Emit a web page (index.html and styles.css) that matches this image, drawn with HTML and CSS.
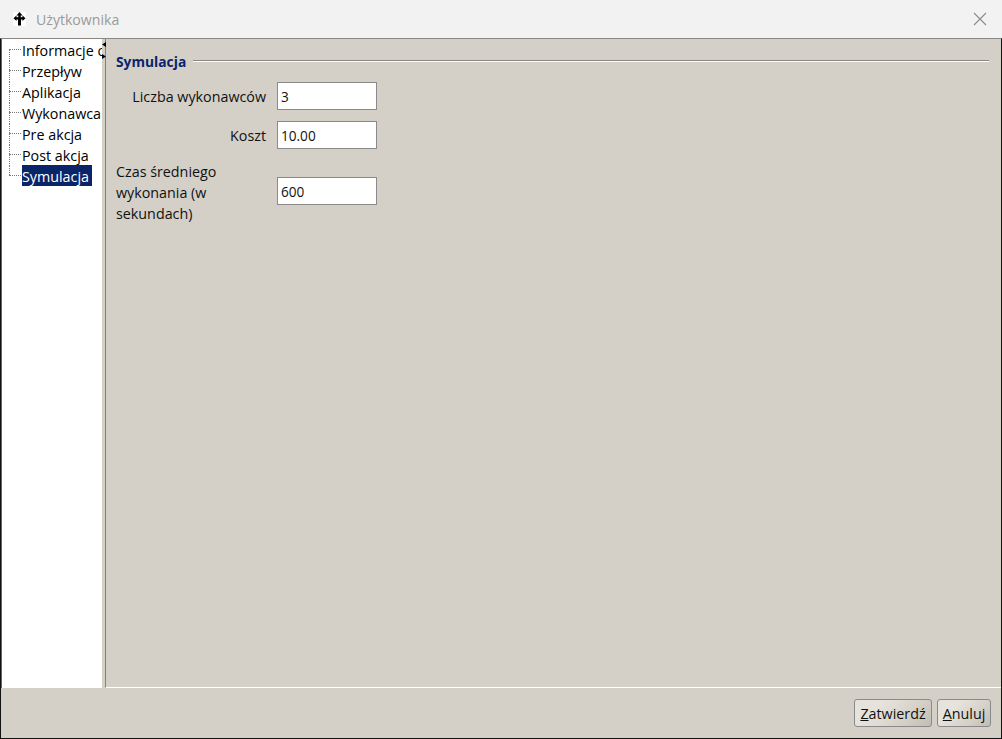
FILE: index.html
```html
<!DOCTYPE html>
<html lang="pl">
<head>
<meta charset="utf-8">
<title>Użytkownika</title>
<link rel="stylesheet" href="styles.css">
</head>
<body>
<div class="window">
  <header class="titlebar">
    <svg class="app-icon" width="13" height="14" viewBox="0 0 13 14"><rect width="13" height="14" fill="#fbfdff"/><path d="M6.5 0 L9.5 3.5 H7.7 V5.2 H9.5 V3.6 L12.5 6.3 L9.5 9 V7.4 H8 V13.5 H5 V7.4 H3.5 V9 L0.5 6.3 L3.5 3.6 V5.2 H5.3 V3.5 H3.5 Z" fill="#000"/></svg>
    <span class="title">Użytkownika</span>
    <svg class="close" width="14" height="14" viewBox="0 0 14 14"><path d="M1 1 L13 13 M13 1 L1 13" stroke="#8a8a8a" stroke-width="1.1" fill="none"/></svg>
  </header>
  <div class="frame">
    <div class="main">
      <nav class="tree">
        <ul class="tree-list">
          <li class="tree-item first"><span class="tree-label">Informacje o</span></li>
          <li class="tree-item"><span class="tree-label">Przepływ</span></li>
          <li class="tree-item"><span class="tree-label">Aplikacja</span></li>
          <li class="tree-item"><span class="tree-label">Wykonawca</span></li>
          <li class="tree-item"><span class="tree-label">Pre akcja</span></li>
          <li class="tree-item"><span class="tree-label">Post akcja</span></li>
          <li class="tree-item last"><span class="tree-label selected">Symulacja</span></li>
        </ul>
      </nav>
      <div class="splitter">
        <svg class="resize-cursor" width="5" height="17" viewBox="0 0 5 17"><path d="M4 0 V5 L0 2.5 Z M0 12 L4 14.5 L0 17 Z" fill="#000"/></svg>
      </div>
      <section class="panel">
        <div class="group-head"><span class="group-title">Symulacja</span><span class="group-line"></span></div>
        <div class="form">
          <div class="row"><label class="lbl">Liczba wykonawców</label><input class="field" value="3"></div>
          <div class="row"><label class="lbl">Koszt</label><input class="field" value="10.00"></div>
          <div class="row tall"><label class="lbl left">Czas średniego wykonania (w sekundach)</label><input class="field" value="600"></div>
        </div>
      </section>
    </div>
    <footer class="actions">
      <button class="btn"><u>Z</u>atwierdź</button>
      <button class="btn"><u>A</u>nuluj</button>
    </footer>
  </div>
</div>
</body>
</html>
```
FILE: styles.css
```css
* { box-sizing: border-box; }
html, body { margin: 0; padding: 0; }
body { width: 1002px; height: 739px; overflow: hidden; font-family: "Open Sans", "Noto Sans", sans-serif; font-size: 14.3px; color: #111; }
.window { display: flex; flex-direction: column; width: 100%; height: 100%; background: #f2f2f2; }
.titlebar { display: flex; align-items: center; height: 38px; padding: 0 15px 0 13px; background: #f2f2f2; flex: none; }
.app-icon { flex: none; }
.title { margin-left: 10px; color: #9a9a9a; font-size: 14.1px; flex: 1; }
.close { flex: none; }
.frame { flex: 1; display: flex; flex-direction: column; min-height: 0; border-left: 1px solid #111; border-right: 1px solid #111; border-bottom: 1px solid #111; border-top: 1px solid #8a8782; background: #d4d0c8; }
.main { flex: 1; display: flex; min-height: 0; }
.tree { width: 101px; flex: none; background: #fff; border-left: 1px solid #666; padding-top: 1px; overflow: hidden; color: #000; }
.tree-list { list-style: none; margin: 0; padding: 0; }
.tree-item { position: relative; height: 21px; padding-left: 20px; white-space: nowrap; line-height: 21px; overflow: hidden; }
.tree-item::before { content: ""; position: absolute; left: 7px; top: 0; bottom: 0; border-left: 1px dotted #777; }
.tree-item::after { content: ""; position: absolute; left: 7px; top: 9px; width: 12px; border-top: 1px dotted #777; }
.tree-item.first::before { top: 9px; }
.tree-item.last { margin-top: -1px; height: 22px; }
.tree-item.last::before { bottom: 12px; }
.tree-item.last::after { top: 10px; }
.tree-label { display: block; width: max-content; height: 21px; }
.selected { background: #0a246a; color: #fff; padding-right: 3px; line-height: 23px; }
.splitter { position: relative; width: 3px; flex: none; background: #d4d0c8; }
.resize-cursor { position: absolute; left: 0; top: 3px; }
.panel { flex: 1; padding: 12px 12px 0 10px; min-width: 0; border-left: 1px solid #808080; border-bottom: 1px solid #fff; }
.group-head { display: flex; align-items: center; gap: 7px; height: 20px; }
.group-title { font-weight: 700; color: #0a246a; font-size: 13.8px; }
.group-line { flex: 1; height: 2px; border-top: 1px solid #8a8782; border-bottom: 1px solid #fff; }
.form { display: flex; flex-direction: column; gap: 11px; padding-top: 11px; }
.row { display: flex; align-items: center; gap: 11px; }
.row.tall { align-items: flex-start; }
.row.tall .lbl { padding-top: 1px; }
.row.tall .field { margin-top: 17px; }
.lbl { width: 150px; text-align: right; line-height: 21px; flex: none; }
.lbl.left { text-align: left; }
.field { width: 100px; height: 28px; flex: none; border: 1px solid #8a8a8a; background: #fff; padding: 0 3px; font: inherit; font-size: 13.6px; color: #111; outline: none; }
.actions { display: flex; justify-content: flex-end; gap: 5px; height: 50px; padding: 11px 10px 0 0; flex: none; }
.btn { height: 28px; padding: 0; border: 1px solid #8a8a8a; border-radius: 3px; background: linear-gradient(135deg, #e6e3dc 30%, #d4d0c8 70%, #c0bdb6); font: inherit; color: #111; }
.btn:first-child { width: 78px; }
.btn:last-child { width: 54px; }
```
